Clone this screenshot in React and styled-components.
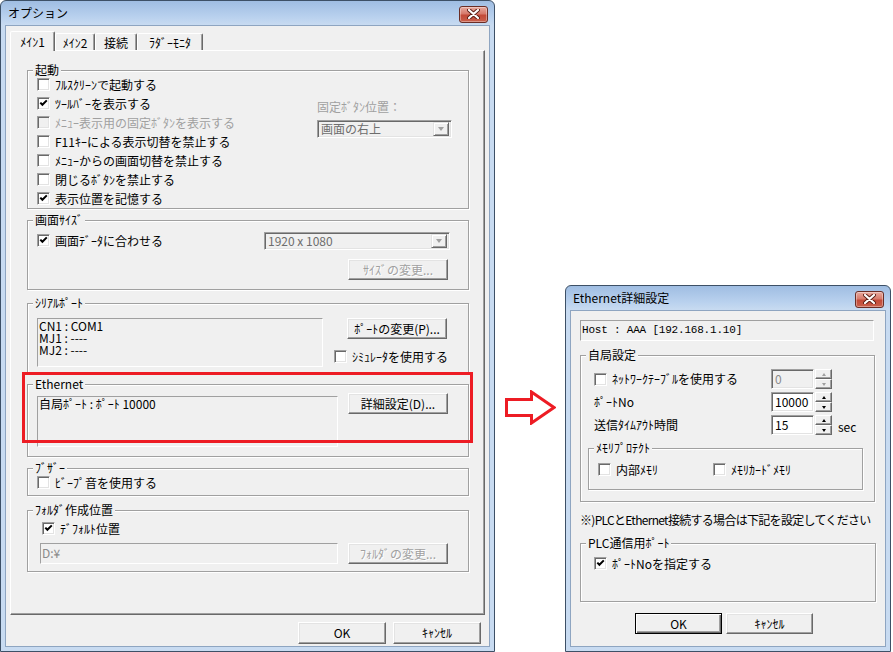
import React from 'react';
import styled, { createGlobalStyle, css } from 'styled-components';

const GlobalStyle = createGlobalStyle`
  html, body {
    margin: 0;
    padding: 0;
    background: #fff;
  }
  body {
    font-family: "Noto Sans CJK JP", "Noto Sans", sans-serif;
    font-size: 12px;
    line-height: 14px;
    color: #000;
  }
  * {
    box-sizing: border-box;
  }
`;

const Page = styled.div`
  display: flex;
  align-items: flex-start;
  width: 893px;
  height: 652px;
  overflow: hidden;
`;

/* window chrome */
const Window = styled.div`
  flex: none;
  display: flex;
  flex-direction: column;
  width: ${(p) => p.$w}px;
  height: ${(p) => p.$h}px;
  margin-top: ${(p) => p.$top || 0}px;
  border: 1px solid #3d5066;
  border-radius: 6px 6px 0 0;
  background: linear-gradient(#9fbde2 0, #b9d1ee 16px, #c8dbf1 24px, #c8dbf1 100%);
  padding: 0 4px 4px;
`;

const TitleBar = styled.div`
  height: 24px;
  display: flex;
  align-items: center;
  justify-content: space-between;
  padding: 0 2px 0 3px;
`;

const Title = styled.span`
  font-size: 12px;
  color: #000;
`;

const CloseButton = styled.div`
  width: 29px;
  height: 17px;
  margin-top: 2px;
  display: flex;
  align-items: center;
  justify-content: center;
  border: 1px solid #6b2d25;
  border-radius: 3px;
  background: linear-gradient(#e7aa9f 0%, #d77a6b 45%, #c34a38 55%, #c9604c 100%);
  box-shadow: inset 0 0 0 1px rgba(255, 255, 255, 0.35);
`;

const Client = styled.div`
  flex: 1;
  display: flex;
  flex-direction: column;
  border: 1px solid #8ea5c1;
  background: #f0f0f0;
  padding: ${(p) => p.$pad};
`;

/* tabs */
const TabStrip = styled.div`
  display: flex;
  align-items: flex-end;
  height: 19px;
`;

const Tab = styled.div`
  width: ${(p) => p.$w}px;
  height: 17px;
  display: flex;
  align-items: center;
  justify-content: center;
  padding-top: 1px;
  border: 1px solid;
  border-bottom: none;
  border-color: #fff #696969 transparent #fff;
  border-radius: 2px 2px 0 0;
  box-shadow: inset -1px 0 0 #a0a0a0;
  background: #f0f0f0;
  ${(p) =>
    p.$active &&
    css`
      height: 20px;
      margin-bottom: -1px;
      align-items: flex-start;
      padding-top: 3px;
      position: relative;
      z-index: 1;
    `}
`;

const TabPanel = styled.div`
  width: 475px;
  height: 565px;
  display: flex;
  flex-direction: column;
  padding: 19px 0 0 16px;
  border: 1px solid;
  border-color: #fff #696969 #696969 #fff;
  box-shadow: inset -1px -1px 0 #a0a0a0;
`;

/* group boxes */
const Group = styled.div`
  position: relative;
  flex: none;
  display: flex;
  flex-direction: ${(p) => (p.$row ? 'row' : 'column')};
  align-items: flex-start;
  width: ${(p) => p.$w}px;
  height: ${(p) => p.$h}px;
  margin-top: ${(p) => p.$mt || 0}px;
  margin-left: ${(p) => p.$ml || 0}px;
  padding: ${(p) => p.$pad};
  border: 1px solid #a0a0a0;
  box-shadow: inset 1px 1px 0 #fff, 1px 1px 0 #fff;
`;

const Legend = styled.span`
  position: absolute;
  top: -8px;
  left: 5px;
  padding: 0 2px;
  background: #f0f0f0;
  white-space: nowrap;
`;

const Highlight = styled.div`
  position: absolute;
  top: -13px;
  left: -6px;
  width: 451px;
  height: 71px;
  border: 3px solid #ed1c24;
  pointer-events: none;
`;

const Column = styled.div`
  display: flex;
  flex-direction: column;
`;

const SideColumn = styled.div`
  display: flex;
  flex-direction: column;
  align-items: ${(p) => p.$align || 'flex-start'};
  margin-left: auto;
  padding-top: ${(p) => p.$pt || 0}px;
`;

const Row = styled.div`
  display: flex;
  align-items: center;
  align-self: stretch;
  margin-top: ${(p) => p.$mt || 0}px;
`;

/* controls */
const CheckRow = styled.label`
  display: flex;
  align-items: center;
  gap: 5px;
  height: 19px;
  width: ${(p) => (p.$w ? `${p.$w}px` : 'auto')};
  margin-left: ${(p) => p.$ml || 0}px;
  margin-top: ${(p) => p.$mt || 0}px;
  color: ${(p) => (p.$disabled ? '#a0a0a0' : '#000')};
  white-space: nowrap;
`;

const Box = styled.span`
  flex: none;
  width: 13px;
  height: 13px;
  display: flex;
  align-items: center;
  justify-content: center;
  border: 1px solid;
  border-color: #a0a0a0 #fff #fff #a0a0a0;
  box-shadow: inset 1px 1px 0 #696969, inset -1px -1px 0 #e3e3e3;
  background: ${(p) => (p.$disabled ? '#f0f0f0' : '#fff')};
`;

const Check = ({ checked, disabled, children, ...rest }) => (
  <CheckRow $disabled={disabled} {...rest}>
    <Box $disabled={disabled}>
      {checked && (
        <svg width="9" height="9" viewBox="0 0 9 9">
          <polyline points="1.3,3.6 3.4,5.8 7.8,1.4" fill="none" stroke="#000" strokeWidth="2" />
        </svg>
      )}
    </Box>
    <span>{children}</span>
  </CheckRow>
);

const Label = styled.span`
  color: ${(p) => (p.$disabled ? '#a0a0a0' : '#000')};
  margin-left: ${(p) => p.$ml || 0}px;
  white-space: nowrap;
`;

const sunken = css`
  border: 1px solid;
  border-color: #a0a0a0 #fff #fff #a0a0a0;
  box-shadow: inset 1px 1px 0 #696969, inset -1px -1px 0 #e3e3e3;
`;

const Combo = styled.div`
  ${sunken};
  display: flex;
  align-items: center;
  width: ${(p) => p.$w}px;
  height: 18px;
  margin-top: ${(p) => p.$mt || 0}px;
  margin-right: ${(p) => p.$mr || 0}px;
  margin-left: ${(p) => (p.$auto ? 'auto' : '0')};
  padding: 0 2px 0 3px;
  color: #6d6d6d;
  background: #f0f0f0;
`;

const ComboText = styled.span`
  flex: 1;
`;

const DropButton = styled.span`
  width: 16px;
  height: 14px;
  display: flex;
  align-items: center;
  justify-content: center;
  border: 1px solid;
  border-color: #e3e3e3 #696969 #696969 #e3e3e3;
  box-shadow: inset 1px 1px 0 #fff, inset -1px -1px 0 #a0a0a0;
  &::after {
    content: '';
    border-left: 3.5px solid transparent;
    border-right: 3.5px solid transparent;
    border-top: 4px solid #a0a0a0;
  }
`;

const ComboBox = ({ children, ...rest }) => (
  <Combo {...rest}>
    <ComboText>{children}</ComboText>
    <DropButton />
  </Combo>
);

const Static = styled.div`
  flex: none;
  width: ${(p) => p.$w}px;
  height: ${(p) => p.$h}px;
  margin-top: ${(p) => p.$mt || 0}px;
  padding: ${(p) => p.$pad || '1px 1px'};
  border: 1px solid;
  border-color: #a0a0a0 #fff #fff #a0a0a0;
  color: ${(p) => (p.$gray ? '#8a8a8a' : '#000')};
  font-family: ${(p) => (p.$mono ? '"Liberation Mono", "Noto Sans CJK JP", monospace' : 'inherit')};
  font-size: ${(p) => (p.$mono ? '11px' : '12px')};
  letter-spacing: ${(p) => (p.$mono ? '-0.2px' : '0')};
  line-height: 12px;
  white-space: pre;
`;

const Button = styled.button`
  flex: none;
  width: ${(p) => p.$w}px;
  height: ${(p) => p.$h || 21}px;
  margin-top: ${(p) => p.$mt || 0}px;
  margin-left: ${(p) => (p.$auto ? 'auto' : `${p.$ml || 0}px`)};
  margin-right: ${(p) => p.$mr || 0}px;
  padding: 0;
  font: inherit;
  font-size: 12px;
  line-height: 14px;
  color: #000;
  background: #f0f0f0;
  border: 1px solid;
  border-color: #fff #696969 #696969 #fff;
  box-shadow: inset -1px -1px 0 #a0a0a0, inset 1px 1px 0 #e3e3e3;
  &:disabled {
    color: #a0a0a0;
    text-shadow: 1px 1px 0 #fff;
  }
  ${(p) =>
    p.$default &&
    css`
      border-color: #000;
      box-shadow: inset 1px 1px 0 #fff, inset -1px -1px 0 #696969, inset -2px -2px 0 #a0a0a0;
    `}
`;

const ButtonRow = styled.div`
  display: flex;
  justify-content: ${(p) => p.$justify || 'flex-end'};
  gap: ${(p) => p.$gap}px;
  margin-top: ${(p) => p.$mt}px;
  padding: ${(p) => p.$pad || 0};
`;

/* spin edit */
const SettingRow = styled.div`
  display: grid;
  grid-template-columns: 177px auto auto;
  align-items: center;
  height: 20px;
  margin-top: ${(p) => p.$mt || 0}px;
`;

const Spin = styled.div`
  display: flex;
  height: 20px;
`;

const SpinInput = styled.div`
  ${sunken};
  width: 43px;
  height: 20px;
  padding: 2px 3px;
  line-height: 14px;
  background: ${(p) => (p.$disabled ? '#f0f0f0' : '#fff')};
  color: ${(p) => (p.$disabled ? '#8a8a8a' : '#000')};
`;

const SpinButtons = styled.div`
  display: flex;
  flex-direction: column;
  width: 17px;
  margin-left: 1px;
`;

const SpinButton = styled.span`
  flex: 1;
  display: flex;
  align-items: center;
  justify-content: center;
  border: 1px solid;
  border-color: #fff #696969 #696969 #fff;
  box-shadow: inset -1px -1px 0 #a0a0a0;
  background: #f0f0f0;
  &::after {
    content: '';
    border-left: 2.5px solid transparent;
    border-right: 2.5px solid transparent;
    ${(p) =>
      p.$down
        ? css`border-top: 3px solid ${p.$disabled ? '#a0a0a0' : '#000'};`
        : css`border-bottom: 3px solid ${p.$disabled ? '#a0a0a0' : '#000'};`}
  }
`;

const SpinEdit = ({ value, disabled }) => (
  <Spin>
    <SpinInput $disabled={disabled}>{value}</SpinInput>
    <SpinButtons>
      <SpinButton $disabled={disabled} />
      <SpinButton $disabled={disabled} $down />
    </SpinButtons>
  </Spin>
);

const Unit = styled.span`
  margin-left: 6px;
  padding-top: 4px;
`;

const Note = styled.div`
  margin-top: ${(p) => p.$mt}px;
  letter-spacing: -0.7px;
  white-space: nowrap;
`;

const ArrowWrap = styled.div`
  flex: none;
  width: 70px;
  margin-top: 390px;
  padding-left: 10px;
`;

const CloseIcon = () => (
  <svg width="13" height="10" viewBox="0 0 13 10">
    <path d="M2 1 L11 9 M11 1 L2 9" stroke="#5a1d14" strokeWidth="4" strokeLinecap="round" />
    <path d="M2 1 L11 9 M11 1 L2 9" stroke="#fff" strokeWidth="2.2" strokeLinecap="round" />
  </svg>
);

const tabs = [
  { label: 'ﾒｲﾝ1', w: 45, active: true },
  { label: 'ﾒｲﾝ2', w: 40 },
  { label: '接続', w: 42 },
  { label: 'ﾗﾀﾞｰﾓﾆﾀ', w: 66 },
];

const startupOptions = [
  { label: 'ﾌﾙｽｸﾘｰﾝで起動する' },
  { label: 'ﾂｰﾙﾊﾞｰを表示する', checked: true },
  { label: 'ﾒﾆｭｰ表示用の固定ﾎﾞﾀﾝを表示する', disabled: true },
  { label: 'F11ｷｰによる表示切替を禁止する' },
  { label: 'ﾒﾆｭｰからの画面切替を禁止する' },
  { label: '閉じるﾎﾞﾀﾝを禁止する' },
  { label: '表示位置を記憶する', checked: true },
];

const OptionsDialog = () => (
  <Window $w={495} $h={652}>
    <TitleBar>
      <Title>オプション</Title>
      <CloseButton>
        <CloseIcon />
      </CloseButton>
    </TitleBar>
    <Client $pad="5px 4px 0">
      <TabStrip>
        {tabs.map((t) => (
          <Tab key={t.label} $w={t.w} $active={t.active}>
            {t.label}
          </Tab>
        ))}
      </TabStrip>
      <TabPanel>
        <Group $row $w={442} $h={139} $pad="4px 16px 0 9px">
          <Legend>起動</Legend>
          <Column>
            {startupOptions.map((o) => (
              <Check key={o.label} checked={o.checked} disabled={o.disabled}>
                {o.label}
              </Check>
            ))}
          </Column>
          <SideColumn $pt={25}>
            <Label $disabled>固定ﾎﾞﾀﾝ位置：</Label>
            <ComboBox $w={135} $mt={6}>画面の右上</ComboBox>
          </SideColumn>
        </Group>

        <Group $w={442} $h={70} $mt={11} $pad="10px 0 0 9px">
          <Legend>画面ｻｲｽﾞ</Legend>
          <Row>
            <Check checked>画面ﾃﾞｰﾀに合わせる</Check>
            <ComboBox $w={186} $auto $mr={18}>1920 x 1080</ComboBox>
          </Row>
          <Button disabled $w={100} $mt={9} $auto $mr={20}>
            ｻｲｽﾞの変更...
          </Button>
        </Group>

        <Group $row $w={442} $h={70} $mt={13} $pad="14px 20px 0 9px">
          <Legend>ｼﾘｱﾙﾎﾟｰﾄ</Legend>
          <Static $w={286} $h={49}>
            {'CN1 : COM1\nMJ1 : ----\nMJ2 : ----'}
          </Static>
          <SideColumn>
            <Button $w={100}>ﾎﾟｰﾄの変更(P)...</Button>
            <Check $ml={-13} $mt={8}>
              ｼﾐｭﾚｰﾀを使用する
            </Check>
          </SideColumn>
        </Group>

        <Group $row $w={442} $h={73} $mt={11} $pad="8px 20px 0 9px">
          <Legend>Ethernet</Legend>
          <Static $w={301} $h={51} $mt={3}>
            自局ﾎﾟｰﾄ : ﾎﾟｰﾄ 10000
          </Static>
          <Button $w={100} $auto>
            詳細設定(D)...
          </Button>
          <Highlight />
        </Group>

        <Group $w={442} $h={28} $mt={11} $pad="4px 0 0 9px">
          <Legend>ﾌﾞｻﾞｰ</Legend>
          <Check>ﾋﾞｰﾌﾟ音を使用する</Check>
        </Group>

        <Group $w={442} $h={62} $mt={14} $pad="8px 20px 0 12px">
          <Legend>ﾌｫﾙﾀﾞ作成位置</Legend>
          <Check checked $ml={2}>
            ﾃﾞﾌｫﾙﾄ位置
          </Check>
          <Row $mt={5}>
            <Static $w={298} $h={21} $gray $pad="3px 1px">
              D:¥
            </Static>
            <Button disabled $w={100} $auto>
              ﾌｫﾙﾀﾞの変更...
            </Button>
          </Row>
        </Group>
      </TabPanel>
      <ButtonRow $gap={7} $mt={7} $pad="0 4px 0 0">
        <Button $w={88} $h={22}>
          OK
        </Button>
        <Button $w={88} $h={22}>
          ｷｬﾝｾﾙ
        </Button>
      </ButtonRow>
    </Client>
  </Window>
);

const EthernetDialog = () => (
  <Window $w={326} $h={367} $top={285}>
    <TitleBar>
      <Title>Ethernet詳細設定</Title>
      <CloseButton>
        <CloseIcon />
      </CloseButton>
    </TitleBar>
    <Client $pad="0 0 0 9px">
      <Static $w={294} $h={21} $mt={9} $mono $pad="3px 1px">
        Host : AAA [192.168.1.10]
      </Static>

      <Group $w={295} $h={147} $mt={14} $pad="13px 0 0 13px">
        <Legend>自局設定</Legend>
        <SettingRow>
          <Check>ﾈｯﾄﾜｰｸﾃｰﾌﾞﾙを使用する</Check>
          <SpinEdit value="0" disabled />
        </SettingRow>
        <SettingRow $mt={3}>
          <Label>ﾎﾟｰﾄNo</Label>
          <SpinEdit value="10000" />
        </SettingRow>
        <SettingRow $mt={3}>
          <Label>送信ﾀｲﾑｱｳﾄ時間</Label>
          <SpinEdit value="15" />
          <Unit>sec</Unit>
        </SettingRow>
        <Group $row $w={275} $h={42} $mt={13} $ml={-6} $pad="11px 0 0 9px">
          <Legend>ﾒﾓﾘﾌﾟﾛﾃｸﾄ</Legend>
          <Check $w={115}>内部ﾒﾓﾘ</Check>
          <Check>ﾒﾓﾘｶｰﾄﾞﾒﾓﾘ</Check>
        </Group>
      </Group>

      <Note $mt={11}>※)PLCとEthernet接続する場合は下記を設定してください</Note>

      <Group $w={296} $h={59} $mt={16} $pad="10px 0 0 13px">
        <Legend>PLC通信用ﾎﾟｰﾄ</Legend>
        <Check checked>ﾎﾟｰﾄNoを指定する</Check>
      </Group>

      <ButtonRow $justify="flex-start" $gap={4} $mt={11} $pad="0 0 0 55px">
        <Button $default $w={87}>
          OK
        </Button>
        <Button $w={87}>ｷｬﾝｾﾙ</Button>
      </ButtonRow>
    </Client>
  </Window>
);

const Arrow = () => (
  <svg width="51" height="35" viewBox="0 0 51 35">
    <polygon
      points="1.5,9.5 26.5,9.5 26.5,2 49,17.5 26.5,33 26.5,25.5 1.5,25.5"
      fill="#fff"
      stroke="#ed1c24"
      strokeWidth="3"
    />
  </svg>
);

const App = () => (
  <>
    <GlobalStyle />
    <Page>
      <OptionsDialog />
      <ArrowWrap>
        <Arrow />
      </ArrowWrap>
      <EthernetDialog />
    </Page>
  </>
);

export default App;
